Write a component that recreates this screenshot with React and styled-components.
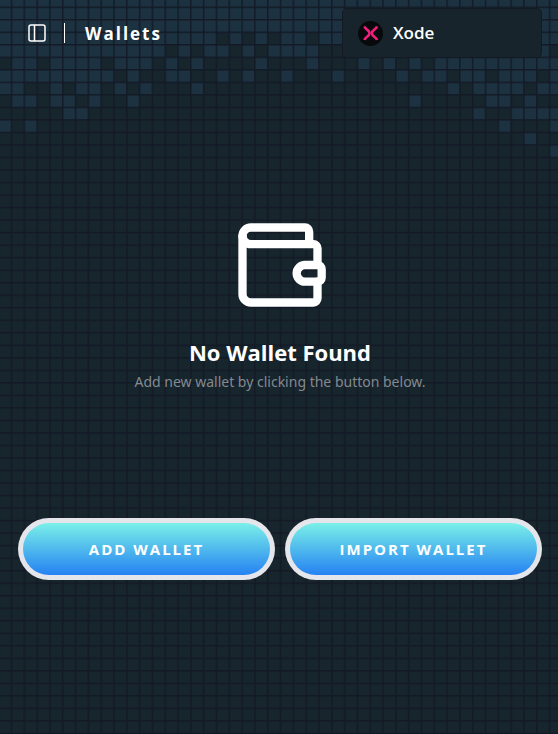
import React from "react";
import styled, { createGlobalStyle } from "styled-components";
import { Wallet } from "lucide-react";

const GlobalStyle = createGlobalStyle`
  *, *::before, *::after { box-sizing: border-box; }
  html, body { margin: 0; background: #17242b; }
  body { font-family: "Open Sans", "Noto Sans", sans-serif; color: #ffffff; }
`;

const Page = styled.div`
  position: relative;
  isolation: isolate;
  display: flex;
  flex-direction: column;
  min-height: 100vh;
  padding: 8px 16px 0 18px;
  overflow: hidden;
`;

const Backdrop = styled.svg`
  position: absolute;
  inset: 0;
  z-index: -1;
  width: 100%;
  height: 100%;
`;

const Header = styled.header`
  display: flex;
  align-items: center;
  justify-content: space-between;
`;

const TitleGroup = styled.div`
  display: flex;
  align-items: center;
`;

const IconButton = styled.button`
  display: flex;
  align-items: center;
  justify-content: center;
  width: 38px;
  height: 38px;
  padding: 0;
  border: 0;
  background: none;
  color: #ffffff;
  cursor: pointer;
`;

const Divider = styled.span`
  width: 1px;
  height: 20px;
  margin: 0 20px 0 8px;
  background: #ffffff;
`;

const PageTitle = styled.h1`
  margin: 0;
  padding-top: 2px;
  font-size: 17px;
  line-height: 24px;
  font-weight: 700;
  letter-spacing: 2px;
`;

const NetworkButton = styled.button`
  display: flex;
  align-items: center;
  gap: 10px;
  width: 200px;
  height: 50px;
  padding: 0 15px;
  border: 1px solid #131a26;
  border-radius: 5px;
  background: #17242b;
  color: #ffffff;
  font: 600 17px/24px "Open Sans", "Noto Sans", sans-serif;
  cursor: pointer;
`;

const EmptyState = styled.main`
  display: flex;
  flex-direction: column;
  align-items: center;
  padding: 157px 0 124px;
  text-align: center;
`;

const EmptyTitle = styled.h2`
  margin: 21px 0 0;
  font-size: 22px;
  line-height: 32px;
  font-weight: 700;
`;

const EmptyText = styled.p`
  margin: 2px 0 0;
  font-family: "Noto Sans", "Open Sans", sans-serif;
  font-size: 14px;
  line-height: 24px;
  color: #838a90;
`;

const Actions = styled.div`
  display: grid;
  grid-template-columns: 1fr 1fr;
  gap: 10px;
`;

const ActionButton = styled.button`
  height: 62px;
  padding: 0;
  border: 5px solid transparent;
  border-radius: 31px;
  background:
    linear-gradient(#7af0e8, #2582f2) padding-box,
    linear-gradient(#e5e6eb, #e5e6eb) border-box;
  color: #ffffff;
  font: 700 15px/20px "Open Sans", "Noto Sans", sans-serif;
  letter-spacing: 2px;
  text-transform: uppercase;
  cursor: pointer;
`;

const CELL_W = 12.81;
const CELL_H = 12.52;
const ORIGIN_X = 11.5;
const ORIGIN_Y = 7.3;

// Each row lists its lit cells from the left edge, "#" for lit.
const ROWS = [
  "############################################",
  "############################################",
  "############################################",
  "#################.#.#.##.###################",
  "#############.#.##.#.####.................#.",
  ".##.####.###.#.#....#...#...#.#.#.##########",
  "#########.#..##..#.#..#...#....#.##.##.###.#",
  "##..#.##.#.#...#...................#.####.##",
  ".##.##.#..#.....................#.....##.#..",
  ".....##..............................#..####",
  "#.#....................................#...#",
  ".........................................#..",
  "...........................................#",
];

function GridBackdrop() {
  return (
    <Backdrop aria-hidden="true">
      <defs>
        <pattern
          id="grid"
          x={ORIGIN_X - 0.8}
          y={ORIGIN_Y - 0.8}
          width={CELL_W}
          height={CELL_H}
          patternUnits="userSpaceOnUse"
        >
          <path d={`M0.8 0V${CELL_H}M0 0.8H${CELL_W}`} stroke="#131926" strokeWidth="1.4" />
        </pattern>
      </defs>
      <rect width="100%" height="100%" fill="#17252d" />
      {ROWS.flatMap((row, r) =>
        [...row].map((cell, c) =>
          cell === "#" ? (
            <rect
              key={`${r}-${c}`}
              x={ORIGIN_X + (c - 1) * CELL_W}
              y={ORIGIN_Y + (r - 1) * CELL_H}
              width={CELL_W}
              height={CELL_H}
              fill="#1d3241"
            />
          ) : null
        )
      )}
      <rect width="100%" height="100%" fill="url(#grid)" />
    </Backdrop>
  );
}

function SidebarIcon() {
  return (
    <svg width="18" height="18" viewBox="0 0 18 18" fill="none" stroke="currentColor" strokeWidth="1.5" aria-hidden="true">
      <rect x="1" y="1" width="16" height="16" rx="2" />
      <path d="M6.5 1v16" />
    </svg>
  );
}

function XodeLogo() {
  return (
    <svg width="25" height="25" viewBox="0 0 25 25" aria-hidden="true">
      <circle cx="12.5" cy="12.5" r="12.5" fill="#07090a" />
      <g fill="none" stroke="#f01f7c" strokeWidth="2.6">
        <path d="M6.400 5.400C7.200 8.400 11.600 9.200 11.600 12.200S7.200 16 6.400 19" />
        <path d="M19 5.400C18.200 8.400 13.800 9.200 13.800 12.200S18.200 16 19 19" />
      </g>
    </svg>
  );
}

export default function App() {
  return (
    <Page>
      <GlobalStyle />
      <GridBackdrop />
      <Header>
        <TitleGroup>
          <IconButton type="button" aria-label="Toggle sidebar">
            <SidebarIcon />
          </IconButton>
          <Divider />
          <PageTitle>Wallets</PageTitle>
        </TitleGroup>
        <NetworkButton type="button" aria-haspopup="listbox">
          <XodeLogo />
          Xode
        </NetworkButton>
      </Header>
      <EmptyState>
        <Wallet size={100} aria-hidden="true" />
        <EmptyTitle>No Wallet Found</EmptyTitle>
        <EmptyText>Add new wallet by clicking the button below.</EmptyText>
      </EmptyState>
      <Actions>
        <ActionButton type="button">Add Wallet</ActionButton>
        <ActionButton type="button">Import Wallet</ActionButton>
      </Actions>
    </Page>
  );
}
